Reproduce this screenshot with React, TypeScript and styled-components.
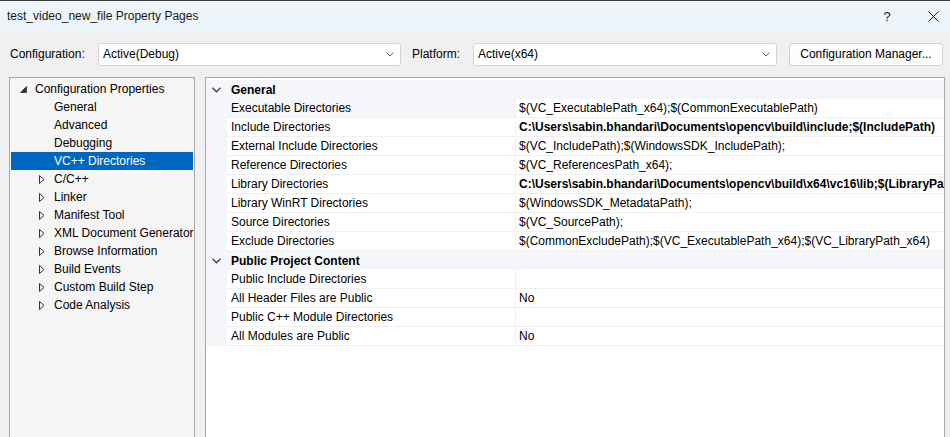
import React from "react";
import styled, { createGlobalStyle } from "styled-components";

const Global = createGlobalStyle`
  html, body { margin: 0; padding: 0; }
  body {
    width: 950px; height: 437px; overflow: hidden;
    font-family: "Segoe UI", "Liberation Sans", Arial, sans-serif;
    font-size: 12px; color: #000; background: #f0f0f0;
  }
`;

const Window = styled.div`
  width: 950px; height: 437px; display: flex; flex-direction: column;
  background: #f0f0f0; overflow: hidden;
`;

const TitleBar = styled.div`
  height: 30px; flex: none; display: flex; align-items: center;
  background: #edf4fa; border-top: 1px solid #3c3c3c;
  padding-left: 7px;
`;
const Title = styled.div`flex: 1; font-size: 12px; color: #1a1a1a;`;
const TitleBtn = styled.div<{ $w: number; $ml?: number }>`
  width: ${p => p.$w}px; margin-left: ${p => p.$ml ?? 0}px; height: 30px;
  display: flex; align-items: center; justify-content: center;
  font-size: 13px; color: #1a1a1a;
`;

const Toolbar = styled.div`
  height: 46px; flex: none; display: flex; align-items: center;
  padding: 0 7px 0 10px; box-sizing: border-box;
`;
const Label = styled.span<{ $w: number }>`
  width: ${p => p.$w}px; flex: none;
`;
const Select = styled.div<{ $w: number; $mr: number }>`
  width: ${p => p.$w}px; height: 23px; box-sizing: border-box; flex: none;
  margin-right: ${p => p.$mr}px;
  background: #fff; border: 1px solid #d5d5d5; border-radius: 3px;
  display: flex; align-items: center; padding: 0 6px 0 4px;
  span { flex: 1; }
`;
const Button = styled.div`
  width: 154px; height: 23px; box-sizing: border-box; flex: none;
  background: #fdfdfd; border: 1px solid #d0d0d0; border-radius: 4px;
  display: flex; align-items: center; justify-content: center;
`;

const Body = styled.div`
  flex: 1; display: flex; gap: 10px; padding: 0 5px 0 9px; min-height: 0;
`;

const Tree = styled.div`
  width: 186px; flex: none; box-sizing: border-box;
  background: #f5f5f5; border: 1px solid #a8a8a8; border-bottom: none;
  padding: 2px 1px 0 1px;
`;
const TreeItem = styled.div<{ $indent: number; $sel?: boolean }>`
  height: 18px; display: flex; align-items: center;
  padding-left: ${p => p.$indent}px; white-space: nowrap;
  background: ${p => (p.$sel ? "#0067c0" : "transparent")};
  color: ${p => (p.$sel ? "#fff" : "#000")};
`;
const Arrow = styled.span`
  width: 15px; flex: none; display: flex; align-items: center;
`;

const Grid = styled.div`
  flex: 1; box-sizing: border-box; background: #fff;
  border: 1px solid #a8a8a8; border-bottom: none; padding-top: 2px;
  overflow: hidden;
`;
const Row = styled.div`
  display: grid; grid-template-columns: 21px 288px 1fr; height: 19px;
`;
const Gutter = styled.div`
  background: #f4f6fa; display: flex; align-items: center; justify-content: center;
`;
const CatGutter = styled(Gutter)`
  width: 21px; height: 19px; flex: none;
`;
const CatRow = styled.div`
  height: 19px; display: flex; align-items: center; background: #f4f6fa;
  font-weight: bold;
  span { padding-left: 4px; }
`;
const Cell = styled.div<{ $hl?: boolean; $bold?: boolean; $value?: boolean }>`
  box-sizing: border-box; border-bottom: 1px solid #f0f0f0;
  border-left: ${p => (p.$value ? "1px solid #f0f0f0" : "none")};
  background: ${p => (p.$hl ? "#f4f6fa" : "#fff")};
  padding-left: ${p => (p.$value ? 3 : 4)}px; padding-top: 1px; line-height: 17px;
  white-space: nowrap; overflow: hidden;
  font-weight: ${p => (p.$bold ? "bold" : "normal")};
`;

const Chevron = ({ size = 8 }: { size?: number }) => (
  <svg width={size} height={size / 2 + 1} viewBox="0 0 8 5">
    <path d="M0.5 0.5 L4 4 L7.5 0.5" fill="none" stroke="#606060" strokeWidth="1" />
  </svg>
);
const CatChevron = () => (
  <svg width="9" height="6" viewBox="0 0 9 6">
    <path d="M0.5 0.8 L4.5 4.8 L8.5 0.8" fill="none" stroke="#404040" strokeWidth="1.3" />
  </svg>
);
const Closed = () => (
  <svg width="6" height="9" viewBox="0 0 6 9">
    <path d="M0.5 0.5 L5 4.5 L0.5 8.5 Z" fill="none" stroke="#333" strokeWidth="1" />
  </svg>
);
const Open = () => (
  <svg width="7" height="7" viewBox="0 0 7 7">
    <path d="M6.5 0.5 L6.5 6.5 L0.5 6.5 Z" fill="#333" stroke="#333" strokeWidth="0.8" />
  </svg>
);

const children: [string, boolean][] = [
  ["General", false], ["Advanced", false], ["Debugging", false], ["VC++ Directories", false],
  ["C/C++", true], ["Linker", true], ["Manifest Tool", true], ["XML Document Generator", true],
  ["Browse Information", true], ["Build Events", true], ["Custom Build Step", true], ["Code Analysis", true],
];

type P = { name: string; value: string; bold?: boolean; hl?: boolean };
const general: P[] = [
  { name: "Executable Directories", value: "$(VC_ExecutablePath_x64);$(CommonExecutablePath)", hl: true },
  { name: "Include Directories", value: "C:\\Users\\sabin.bhandari\\Documents\\opencv\\build\\include;$(IncludePath)", bold: true },
  { name: "External Include Directories", value: "$(VC_IncludePath);$(WindowsSDK_IncludePath);" },
  { name: "Reference Directories", value: "$(VC_ReferencesPath_x64);" },
  { name: "Library Directories", value: "C:\\Users\\sabin.bhandari\\Documents\\opencv\\build\\x64\\vc16\\lib;$(LibraryPath)", bold: true },
  { name: "Library WinRT Directories", value: "$(WindowsSDK_MetadataPath);" },
  { name: "Source Directories", value: "$(VC_SourcePath);" },
  { name: "Exclude Directories", value: "$(CommonExcludePath);$(VC_ExecutablePath_x64);$(VC_LibraryPath_x64)" },
];
const pub: P[] = [
  { name: "Public Include Directories", value: "" },
  { name: "All Header Files are Public", value: "No" },
  { name: "Public C++ Module Directories", value: "" },
  { name: "All Modules are Public", value: "No" },
];

const Category = ({ title, props }: { title: string; props: P[] }) => (
  <>
    <CatRow>
      <CatGutter><CatChevron /></CatGutter>
      <span>{title}</span>
    </CatRow>
    {props.map(p => (
      <Row key={p.name}>
        <Gutter />
        <Cell $hl={p.hl}>{p.name}</Cell>
        <Cell $value $bold={p.bold}>{p.value}</Cell>
      </Row>
    ))}
  </>
);

export default function App() {
  return (
    <Window>
      <Global />
      <TitleBar>
        <Title>test_video_new_file Property Pages</Title>
        <TitleBtn $w={46}>?</TitleBtn>
        <TitleBtn $w={34} $ml={6}>
          <svg width="11" height="11" viewBox="0 0 11 11">
            <path d="M0.5 0.5 L10.5 10.5 M10.5 0.5 L0.5 10.5" stroke="#1a1a1a" strokeWidth="1" />
          </svg>
        </TitleBtn>
      </TitleBar>
      <Toolbar>
        <Label $w={88}>Configuration:</Label>
        <Select $w={303} $mr={11}><span>Active(Debug)</span><Chevron /></Select>
        <Label $w={61}>Platform:</Label>
        <Select $w={304} $mr={12}><span>Active(x64)</span><Chevron /></Select>
        <Button>Configuration Manager...</Button>
      </Toolbar>
      <Body>
        <Tree>
          <TreeItem $indent={9}><Arrow><Open /></Arrow><span>Configuration Properties</span></TreeItem>
          {children.map(([n, exp]) => (
            <TreeItem key={n} $indent={28} $sel={n === "VC++ Directories"}>
              <Arrow>{exp ? <Closed /> : null}</Arrow>{n}
            </TreeItem>
          ))}
        </Tree>
        <Grid>
          <Category title="General" props={general} />
          <Category title="Public Project Content" props={pub} />
        </Grid>
      </Body>
    </Window>
  );
}
